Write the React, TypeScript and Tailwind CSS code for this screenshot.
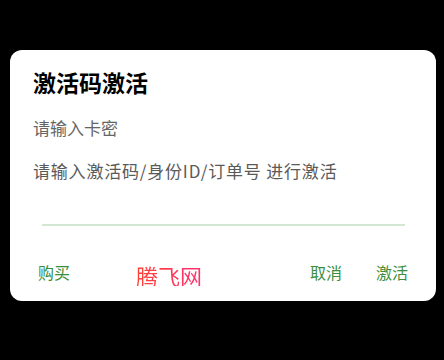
export default function App() {
  return (
    <div
      className="w-[444px] h-[360px] bg-black pt-[50px] px-[10px]"
      style={{ fontFamily: '"Noto Sans CJK SC", "Noto Sans", sans-serif' }}
    >
      <div className="w-[426px] h-[251px] bg-white rounded-[12px] flex flex-col">
        <div className="pl-[23px] pt-[17px] text-[23px] leading-[30px] font-bold text-black">
          激活码激活
        </div>
        <div className="pl-[23px] mt-[20px] text-[17px] leading-[22px] text-[#666666]">
          请输入卡密
        </div>
        <div className="pl-[23px] mt-[21px] text-[17px] leading-[22px] tracking-[0.8px] text-[#5a5a5a]">
          请输入激活码/身份ID/订单号 进行激活
        </div>
        <div className="mt-[42px] ml-[32px] mr-[31px] h-[2px] bg-[#d3e8d3]" />
        <div className="mt-[32px] flex items-center px-[28px] text-[16px] leading-[22px] text-[#3b8e3b]">
          <button className="w-[34px] text-left">购买</button>
          <span className="ml-[64px] mt-[6px] text-[22px] bg-gradient-to-r from-[#ff4030] to-[#ff3070] bg-clip-text text-transparent">
            腾飞网
          </span>
          <div className="ml-auto flex gap-[34px]">
            <button>取消</button>
            <button>激活</button>
          </div>
        </div>
      </div>
    </div>
  );
}
